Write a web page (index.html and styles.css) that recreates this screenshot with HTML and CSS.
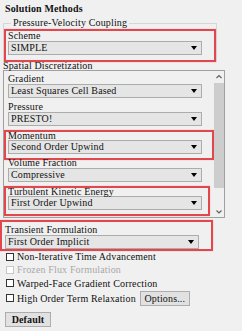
FILE: index.html
```html
<!DOCTYPE html>
<html lang="en">
<head>
  <meta charset="UTF-8">
  <title>Solution Methods</title>
  <link rel="stylesheet" href="styles.css">
</head>
<body>

  <div class="titulo">Solution Methods</div>

  <fieldset class="grupo">
    <legend>Pressure-Velocity Coupling</legend>
    <div class="marca primera">
      <div class="etiqueta">Scheme</div>
      <div class="combo">SIMPLE<svg width="6" height="4" viewBox="0 0 6 4"><path d="M0 0h6L3 4z"/></svg></div>
    </div>
  </fieldset>

  <div class="etiqueta seccion">Spatial Discretization</div>
  <div class="marco">
    <div class="lista">
      <div class="campo">
        <div class="etiqueta">Gradient</div>
        <div class="combo">Least Squares Cell Based<svg width="6" height="4" viewBox="0 0 6 4"><path d="M0 0h6L3 4z"/></svg></div>
      </div>
      <div class="campo">
        <div class="etiqueta">Pressure</div>
        <div class="combo">PRESTO!<svg width="6" height="4" viewBox="0 0 6 4"><path d="M0 0h6L3 4z"/></svg></div>
      </div>
      <div class="campo marca">
        <div class="etiqueta">Momentum</div>
        <div class="combo">Second Order Upwind<svg width="6" height="4" viewBox="0 0 6 4"><path d="M0 0h6L3 4z"/></svg></div>
      </div>
      <div class="campo">
        <div class="etiqueta">Volume Fraction</div>
        <div class="combo">Compressive<svg width="6" height="4" viewBox="0 0 6 4"><path d="M0 0h6L3 4z"/></svg></div>
      </div>
      <div class="campo marca corta">
        <div class="etiqueta">Turbulent Kinetic Energy</div>
        <div class="combo">First Order Upwind<svg width="6" height="4" viewBox="0 0 6 4"><path d="M0 0h6L3 4z"/></svg></div>
      </div>
    </div>
    <div class="barra">
      <svg class="flecha" width="10" height="11" viewBox="0 0 10 11"><path d="M2.5 7L5 4.5L7.5 7" fill="none" stroke="#606060" stroke-width="1.2"/></svg>
      <div class="pulgar"></div>
      <svg class="flecha abajo" width="10" height="11" viewBox="0 0 10 11"><path d="M2.5 4.5L5 7L7.5 4.5" fill="none" stroke="#606060" stroke-width="1.2"/></svg>
    </div>
  </div>

  <div class="marca transitoria">
    <div class="etiqueta">Transient Formulation</div>
    <div class="combo">First Order Implicit<svg width="6" height="4" viewBox="0 0 6 4"><path d="M0 0h6L3 4z"/></svg></div>
  </div>

  <div class="opciones">
    <div class="fila"><span class="caja"></span>Non-Iterative Time Advancement</div>
    <div class="fila inactiva"><span class="caja"></span>Frozen Flux Formulation</div>
    <div class="fila alta"><span class="caja"></span>Warped-Face Gradient Correction</div>
    <div class="fila ultima"><span class="caja"></span>High Order Term Relaxation<button class="boton opcion">Options...</button></div>
  </div>

  <button class="boton defecto">Default</button>

</body>
</html>
```

FILE: styles.css
```css
body {
  margin: 0;
  background-color: #f0f0f0;
  color: #111;
  font-family: "Liberation Serif", serif;
  font-size: 10px;
  letter-spacing: 0.15px;
  width: 242px;
  height: 331px;
  overflow: hidden;
}

.titulo {
  font-weight: bold;
  line-height: 10px;
  padding: 4px 0 0 5px;
}

.grupo {
  margin: 4px 0 0 3px;
  padding: 0;
  width: 203px;
  box-sizing: border-box;
  border: 1px solid #d6d6d6;
  border-bottom: none;
}

.grupo legend {
  margin-left: 7px;
  padding: 0 2px;
  line-height: 10px;
}

.etiqueta {
  line-height: 10px;
  white-space: nowrap;
}

.combo {
  width: 194px;
  height: 14px;
  box-sizing: border-box;
  border: 1px solid #acacac;
  background-color: #e5e5e5;
  padding: 0 4px 0 2px;
  line-height: 12px;
  display: flex;
  justify-content: space-between;
  align-items: center;
  white-space: nowrap;
}

.marca {
  border: 2px solid #e2474d;
  box-shadow: 0 0 1px #f3a0a3;
  box-sizing: border-box;
}

.primera {
  width: 212px;
  margin-top: 1px;
  padding: 0 0 5px 2px;
  background-color: #f0f0f0;
}

.seccion {
  line-height: 8px;
  padding-left: 3px;
}

.marco {
  margin-left: 3px;
  width: 222px;
  height: 148px;
  box-sizing: border-box;
  border: 1px solid #a0a0a0;
  display: flex;
}

.lista {
  flex: 1;
  overflow: hidden;
  padding-top: 3px;
}

.campo {
  padding: 0 0 4px 4px;
}

.campo.marca {
  padding-left: 2px;
  margin-bottom: -2px;
}

.campo.marca .etiqueta {
  line-height: 8px;
}

.corta {
  margin-right: 4px;
}

.barra {
  width: 10px;
  display: flex;
  flex-direction: column;
}

.flecha {
  display: block;
}

.pulgar {
  margin-top: 1px;
  height: 105px;
  background-color: #cdcdcd;
}

.abajo {
  margin-top: auto;
}

.transitoria {
  width: 213px;
  margin-top: 2px;
  padding: 3px 0 0 3px;
}

.opciones {
  margin-top: -1px;
  padding-left: 6px;
}

.fila {
  height: 13px;
  display: flex;
  align-items: center;
  white-space: nowrap;
}

.fila.alta {
  height: 14px;
}

.fila.ultima {
  height: 16px;
}

.caja {
  width: 8px;
  height: 8px;
  box-sizing: border-box;
  border: 1px solid #333;
  background-color: #fff;
  margin-right: 3px;
}

.inactiva {
  color: #a8a8a8;
}

.inactiva .caja {
  border-color: #c8c8c8;
}

.boton {
  height: 15px;
  box-sizing: border-box;
  border: 1px solid #adadad;
  background-color: #e1e1e1;
  font-family: "Liberation Serif", serif;
  font-size: 10px;
  letter-spacing: 0.15px;
  color: #111;
  padding: 0;
}

.opcion {
  width: 50px;
  margin-left: 4px;
}

.defecto {
  display: block;
  width: 46px;
  margin: 6px 0 0 5px;
  font-weight: bold;
}
```
